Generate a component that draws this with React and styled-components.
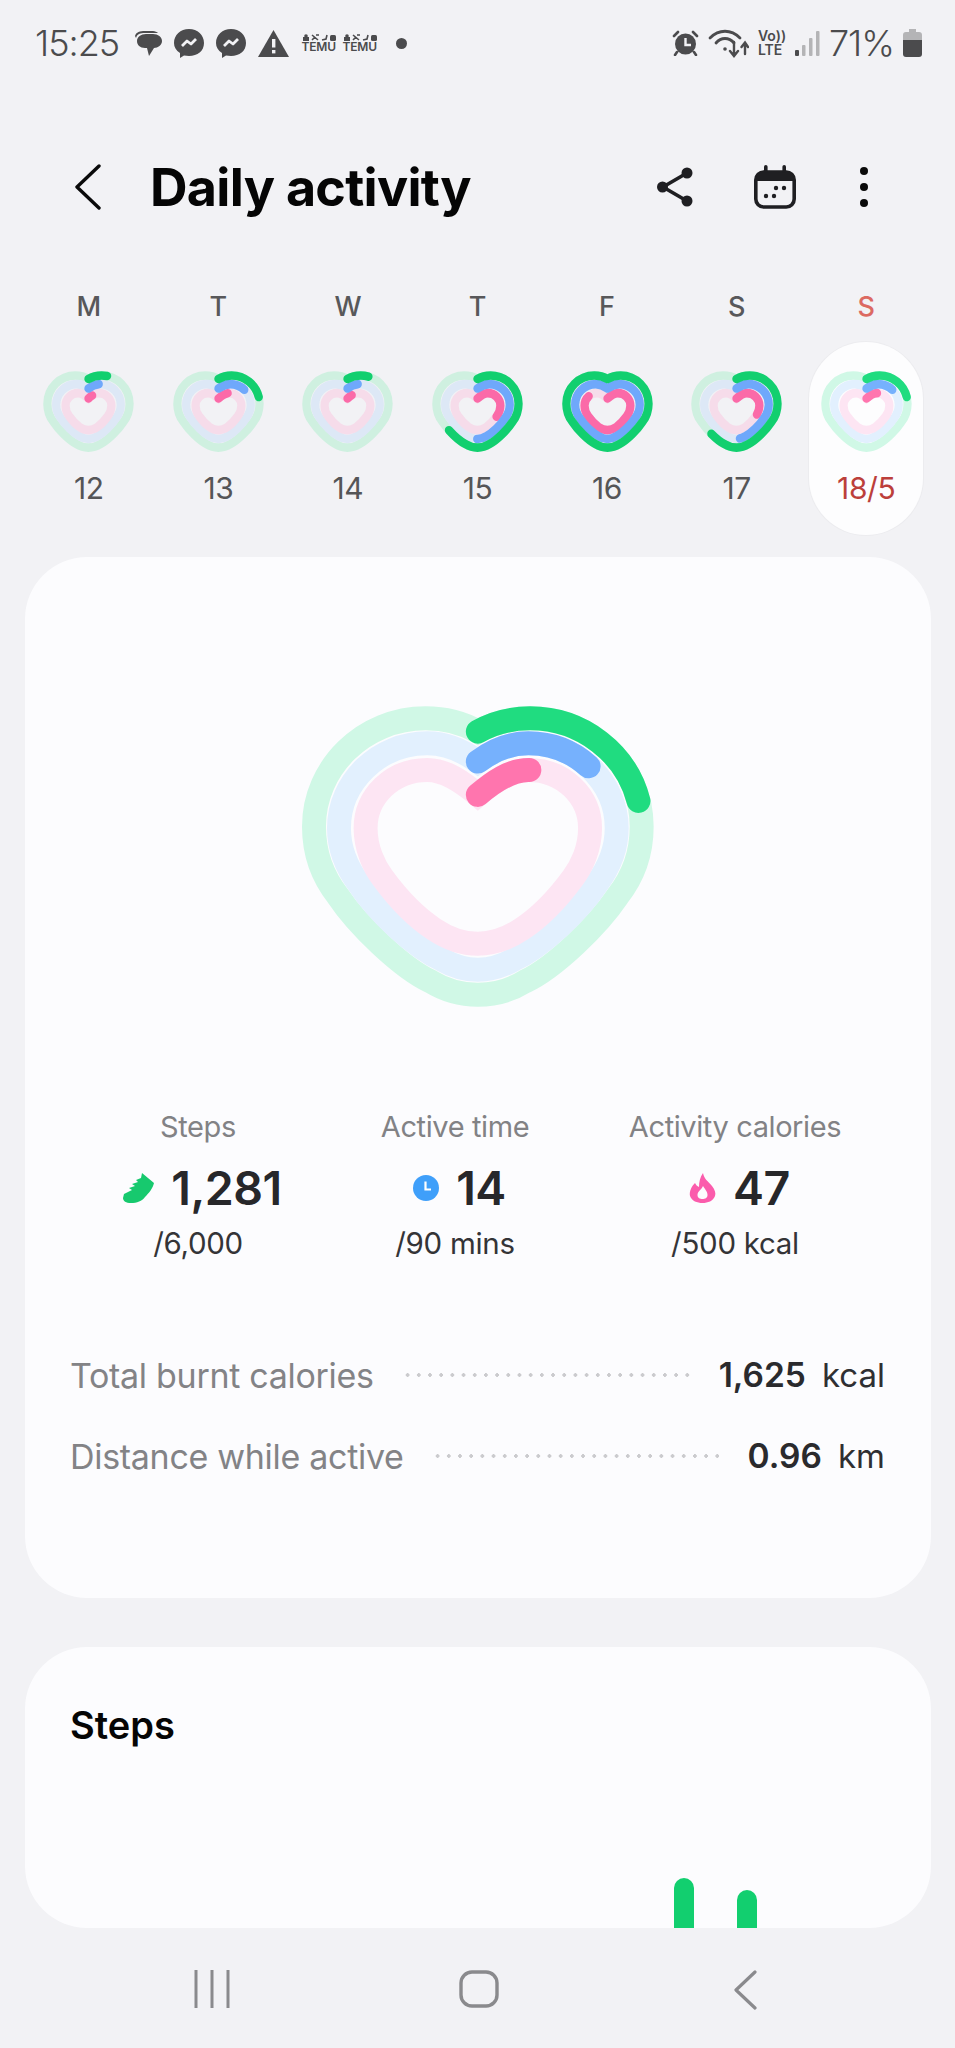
import React from 'react';
import styled, { createGlobalStyle } from 'styled-components';

const OUTER = 'M593 155 C640 128 695 115 750 115 C935 115 1085 262 1085 440 C1085 525 1060 590 1012 650 C955 735 825 862 735 905 C690 933 640 945 593 945 C546 945 496 933 451 905 C361 862 231 735 174 650 C126 590 101 525 101 440 C101 262 251 115 436 115 C491 115 546 128 593 155 Z';
const MIDDLE = 'M593 245 C640 210 690 190 745 190 C890 190 1010 305 1010 445 C1010 510 985 565 950 612 C895 695 785 800 700 840 C665 860 630 870 593 870 C556 870 521 860 486 840 C401 800 291 695 236 612 C201 565 176 510 176 445 C176 305 296 190 441 190 C496 190 546 210 593 245 Z';
const INNER = 'M593 345 C640 305 690 270 745 270 C850 270 930 350 930 445 C930 505 905 560 878 595 C845 640 790 705 725 748 C685 775 640 792 593 792 C546 792 501 775 461 748 C396 705 341 640 308 595 C281 560 256 505 256 445 C256 350 336 270 441 270 C496 270 546 305 593 345 Z';

const RINGS = [OUTER, MIDDLE, INNER];

const days = [
  { label: 'M', date: '12', values: [8, 6, 3.5] },
  { label: 'T', date: '13', values: [21, 15, 8] },
  { label: 'W', date: '14', values: [9, 6, 4] },
  { label: 'T', date: '15', values: [64, 50, 32] },
  { label: 'F', date: '16', values: [100, 100, 84] },
  { label: 'S', date: '17', values: [62, 48, 30] },
  { label: 'S', date: '18/5', values: [21, 15, 9], selected: true },
];

const GlobalStyle = createGlobalStyle`
  html, body {
    margin: 0;
    padding: 0;
    background: #f2f2f5;
  }
  body {
    font-family: 'Inter', 'Roboto', sans-serif;
  }
`;

const Page = styled.div`
  width: 955px;
  height: 2048px;
  overflow: hidden;
  display: flex;
  flex-direction: column;
  background: #f2f2f5;
`;

const StatusBar = styled.div`
  height: 84px;
  padding: 28px 33px 0 35px;
  box-sizing: border-box;
  display: flex;
  align-items: flex-start;
  color: #4b4b4d;
`;

const StatusGroup = styled.div`
  display: flex;
  align-items: center;
  height: 30px;
  gap: ${(p) => p.$gap || 10}px;
  margin-left: ${(p) => (p.$right ? 'auto' : '0')};
`;

const StatusText = styled.span`
  font-size: 36px;
  line-height: 30px;
  font-weight: 300;
  letter-spacing: -1px;
  margin-right: ${(p) => p.$after || 0}px;
`;

const TemuBadge = styled.span`
  display: flex;
  flex-direction: column;
  align-items: center;
  font-size: 12px;
  line-height: 12px;
  font-weight: 600;
  letter-spacing: -0.2px;
  width: 35px;
`;

const StatusDot = styled.span`
  width: 11px;
  height: 11px;
  margin-left: 7px;
  border-radius: 50%;
  background: #4b4b4d;
`;

const VoLte = styled.span`
  display: flex;
  flex-direction: column;
  font-size: 14px;
  line-height: 14px;
  font-weight: 600;
  width: 28px;
`;

const Header = styled.div`
  height: 106px;
  margin-top: 50px;
  box-sizing: border-box;
  padding: 0 0 0 75px;
  display: flex;
  align-items: center;
`;

const Title = styled.h1`
  margin: 0 0 0 49px;
  font-size: 52px;
  font-weight: 700;
  letter-spacing: -0.7px;
  color: #050505;
`;

const HeaderActions = styled.div`
  margin-left: auto;
  display: flex;
  align-items: center;
  margin-right: 87px;
  gap: 60px;
`;

const MoreButton = styled.div`
  display: flex;
  margin-left: 4px;
`;

const Week = styled.div`
  display: grid;
  grid-template-columns: repeat(7, 1fr);
  padding: 0 24px;
  margin-top: 48px;
`;

const Day = styled.div`
  display: flex;
  flex-direction: column;
  align-items: center;
`;

const DayLabel = styled.div`
  font-size: 27px;
  line-height: 30px;
  font-weight: 500;
  height: 30px;
  margin-top: 4px;
  color: ${(p) => (p.$selected ? '#dc6a62' : '#58585a')};
`;

const DayBody = styled.div`
  width: 114px;
  height: 193px;
  margin-top: 20px;
  box-sizing: border-box;
  padding-top: 29px;
  border-radius: 57px;
  display: flex;
  flex-direction: column;
  align-items: center;
  background: ${(p) => (p.$selected ? '#fdfdfe' : 'transparent')};
  box-shadow: ${(p) => (p.$selected ? '0 0 0 1px #ececef' : 'none')};
`;

const DayDate = styled.div`
  font-size: 30px;
  line-height: 34px;
  margin-top: 19px;
  letter-spacing: -0.4px;
  color: ${(p) => (p.$selected ? '#bc3f3b' : '#555557')};
`;

const Card = styled.section`
  margin: ${(p) => p.$top}px 24px 0 25px;
  height: ${(p) => p.$height}px;
  flex-shrink: 0;
  box-sizing: border-box;
  background: #fcfcfe;
  border-radius: 62px;
  overflow: hidden;
  display: flex;
  flex-direction: column;
`;

const BigHeart = styled.div`
  display: flex;
  justify-content: center;
  margin-top: 149px;
`;

const Stats = styled.div`
  display: grid;
  grid-template-columns: 250px 264px 296px;
  margin: 103px 0 0 48px;
`;

const Stat = styled.div`
  display: flex;
  flex-direction: column;
  align-items: center;
`;

const StatLabel = styled.div`
  font-size: 29px;
  line-height: 34px;
  color: #828285;
  letter-spacing: -0.4px;
`;

const StatValue = styled.div`
  display: flex;
  align-items: center;
  gap: 17px;
  height: 54px;
  margin-top: 17px;
  padding-left: 9px;
  font-size: 46.5px;
  font-weight: 600;
  color: #27272a;
  letter-spacing: -0.5px;
`;

const StatGoal = styled.div`
  font-size: 29.5px;
  line-height: 34px;
  margin-top: 11px;
  color: #343437;
  letter-spacing: -0.3px;
`;

const Details = styled.div`
  margin: 95px 46px 0 45px;
  display: flex;
  flex-direction: column;
  gap: 41px;
`;

const DetailRow = styled.div`
  display: flex;
  align-items: center;
  height: 40px;
`;

const DetailLabel = styled.span`
  font-size: 34px;
  color: #838386;
  letter-spacing: -0.3px;
`;

const Dots = styled.span`
  flex: 1;
  height: 4px;
  margin: 0 29px 0 28px;
  background-image: radial-gradient(circle, #cbcbce 1.6px, transparent 2px);
  background-size: 11.2px 4px;
  background-repeat: repeat-x;
`;

const DetailValue = styled.strong`
  font-size: 33.5px;
  font-weight: 600;
  color: #2a2a2d;
`;

const DetailUnit = styled.span`
  font-size: 33px;
  margin-left: 16px;
  color: #2f2f32;
`;

const CardTitle = styled.h2`
  margin: 56px 0 0 45px;
  font-size: 38px;
  line-height: 44px;
  font-weight: 600;
  color: #050505;
`;

const Chart = styled.div`
  flex: 1;
  display: flex;
  align-items: flex-end;
  gap: 43px;
  padding-left: 649px;
`;

const Bar = styled.div`
  width: 20px;
  height: ${(p) => p.$height}px;
  border-radius: 10px 10px 0 0;
  background: #12cf6f;
`;

const NavBar = styled.nav`
  flex: 1;
  display: grid;
  grid-template-columns: repeat(3, 267px);
  padding: 42px 0 0 78px;
  align-content: start;
`;

const NavItem = styled.div`
  display: flex;
  justify-content: center;
`;

// mini hearts have thicker rings, so their centre lines sit further in
const Heart = ({ width, height, values, track, colors, mini }) => {
  const scales = mini ? [0.97, 0.9, 0.79] : [1, 1, 1];
  const stroke = mini ? 96 : 72;
  const ringProps = (i) => ({
    d: RINGS[i],
    strokeWidth: stroke / scales[i],
    transform: `translate(593 532) scale(${scales[i]}) translate(-593 -532)`,
  });
  return (
    <svg width={width} height={height} viewBox="65 78 1057 904" preserveAspectRatio="none">
      <g fill="none" strokeLinecap="round">
        {RINGS.map((d, i) => (
          <path key={d} {...ringProps(i)} stroke={track[i]} />
        ))}
        {[2, 1, 0].map((i) => (
          <path
            key={i}
            {...ringProps(i)}
            pathLength="100"
            stroke={colors[i]}
            strokeDasharray={`${values[i]} 200`}
          />
        ))}
      </g>
    </svg>
  );
};

const BubbleIcon = () => (
  <svg width="28" height="27" viewBox="0 0 28 27" fill="currentColor">
    <path d="M1 6 C2 2 6 1 11 1 H19 C21 1 23 2 24 3 H11 C6 3 3 4 2 8 Z" />
    <path d="M12 4 H19 C24 4 28 7 28 11 C28 15 24 18 20 18 L15 26 L13 18 H11 C6 18 3 15 3 11 C3 7 7 4 12 4 Z" />
  </svg>
);

const MessengerIcon = () => (
  <svg width="30" height="29" viewBox="0 0 30 29">
    <path fill="currentColor" d="M15 0 C23.5 0 30 6 30 14 C30 22 23.5 27 15 27 L10 26.5 L6 29 L6 24 C2 21.5 0 18 0 14 C0 6 6.5 0 15 0 Z" />
    <path fill="none" stroke="#f2f2f5" strokeWidth="2.8" strokeLinejoin="round" d="M8 17 L13 12 L17 15 L22 10" />
  </svg>
);

const WarningIcon = () => (
  <svg width="31" height="27" viewBox="0 0 31 27">
    <path fill="currentColor" d="M15.5 0 L31 27 H0 Z" />
    <rect x="14" y="9" width="3.4" height="8.5" fill="#f2f2f5" />
    <rect x="14" y="20" width="3.4" height="3.4" fill="#f2f2f5" />
  </svg>
);

const TemuGlyph = () => (
  <svg width="34" height="7" viewBox="0 0 34 7" fill="currentColor">
    <rect x="1" y="3" width="6" height="4" />
    <circle cx="4" cy="2" r="1.8" />
    <path d="M10 1 L16 6 M10 6 L13 3 M14 1 L17 1" stroke="currentColor" strokeWidth="1.6" />
    <path d="M20 6 L24 5 L25 1" stroke="currentColor" strokeWidth="1.6" fill="none" />
    <rect x="28" y="1" width="6" height="6" rx="1.5" />
  </svg>
);

const AlarmIcon = () => (
  <svg width="27" height="26" viewBox="0 0 27 26">
    <circle cx="13.5" cy="14" r="10.5" fill="currentColor" />
    <path d="M2 6 L6 2 M25 6 L21 2 M5 22 L3 25 M22 22 L24 25" stroke="currentColor" strokeWidth="2.6" strokeLinecap="round" />
    <path d="M13.5 8 V15 H19" fill="none" stroke="#f2f2f5" strokeWidth="2.4" />
  </svg>
);

const WifiIcon = () => (
  <svg width="41" height="30" viewBox="0 0 41 30" fill="none" stroke="currentColor" strokeLinecap="round">
    <path d="M2 10 C11 1 23 1 32 10" strokeWidth="2.8" />
    <path d="M8 15 C13 9 21 9 26 15" strokeWidth="2.8" />
    <circle cx="17" cy="21" r="1.8" fill="currentColor" stroke="none" />
    <path d="M26 14 V27 M22 23 L26 28 L30 23 M37 26 V15 M33.5 19 L37 14.5 L40 19" strokeWidth="2.4" />
  </svg>
);

const SignalIcon = () => (
  <svg width="25" height="26" viewBox="0 0 25 26">
    <rect x="0" y="20" width="4" height="6" rx="1" fill="#4b4b4d" />
    <rect x="7" y="15" width="3.5" height="11" rx="1" fill="#b4b4b6" />
    <rect x="14" y="8" width="3.5" height="18" rx="1" fill="#b4b4b6" />
    <rect x="21" y="1" width="3.5" height="25" rx="1" fill="#b4b4b6" />
  </svg>
);

const BatteryIcon = () => (
  <svg width="19" height="28" viewBox="0 0 19 28">
    <path fill="#b4b4b6" d="M6 0 H13 V3 H16 C18 3 19 4 19 6 V12 H0 V6 C0 4 1 3 3 3 H6 Z" />
    <path fill="#4b4b4d" d="M0 11 H19 V25 C19 27 18 28 16 28 H3 C1 28 0 27 0 25 Z" />
  </svg>
);

const BackIcon = () => (
  <svg width="26" height="46" viewBox="0 0 26 46" fill="none" stroke="#0a0a0a" strokeWidth="3.4" strokeLinecap="round" strokeLinejoin="round">
    <path d="M24 2 L2 23 L24 44" />
  </svg>
);

const ShareIcon = () => (
  <svg width="38" height="42" viewBox="0 0 38 42" fill="#1f1f22" stroke="#1f1f22">
    <path d="M31 7 L7 21 L31 35" fill="none" strokeWidth="3.6" />
    <circle cx="31" cy="7" r="5.5" strokeWidth="0" />
    <circle cx="6.5" cy="21" r="5.5" strokeWidth="0" />
    <circle cx="31" cy="35" r="5.5" strokeWidth="0" />
  </svg>
);

const CalendarIcon = () => (
  <svg width="42" height="44" viewBox="0 0 42 44" fill="#1f1f22">
    <rect x="1.8" y="7" width="38.4" height="35" rx="8" fill="none" stroke="#1f1f22" strokeWidth="3.6" />
    <path d="M2 15 C2 10 5 6 10 6 H32 C37 6 40 10 40 15 V16 H2 Z" />
    <rect x="10" y="0" width="3.6" height="8" rx="1.8" />
    <rect x="28.4" y="0" width="3.6" height="8" rx="1.8" />
    <circle cx="22" cy="23" r="2.2" />
    <circle cx="30" cy="23" r="2.2" />
    <circle cx="12" cy="31" r="2.2" />
    <circle cx="20" cy="31" r="2.2" />
  </svg>
);

const MoreIcon = () => (
  <svg width="8" height="40" viewBox="0 0 8 40" fill="#0a0a0a">
    <circle cx="4" cy="4" r="4" />
    <circle cx="4" cy="20" r="4" />
    <circle cx="4" cy="36" r="4" />
  </svg>
);

const ShoeIcon = () => (
  <svg width="31" height="30" viewBox="0 0 31 30" fill="#17c96e">
    <path d="M19 0 L31 10 C30 15 26 20 22 24 C19 28 14 30 8 30 C3 30 0 28 0 25 L1 21 L9 17 L6 15 L12 13 L9 11 L15 9 L13 7 L18 5 Z" />
  </svg>
);

const ClockIcon = () => (
  <svg width="26" height="26" viewBox="0 0 26 26">
    <circle cx="13" cy="13" r="13" fill="#3f9ffa" />
    <path d="M12.5 6.5 V14.5 H18" fill="none" stroke="#fff" strokeWidth="2.2" />
  </svg>
);

const FlameIcon = () => (
  <svg width="27" height="30" viewBox="0 0 27 30">
    <path
      fillRule="evenodd"
      fill="#fb5cac"
      d="M14 0 C15 6 19 8 23 13 C26 17 27 20 26 23 C24 28 19 30 13.5 30 C8 30 3 28 1 23 C0 18 3 13 6 10 C7 12 8 13 10 14 C10 9 11 4 14 0 Z M14 13 C12.5 17 8.5 18 8.5 22 C8.5 25 11 26 13.5 26 C16 26 18.5 25 18.5 22 C18.5 18 15.5 16 14 13 Z"
    />
  </svg>
);

const RecentsIcon = () => (
  <svg width="36" height="38" viewBox="0 0 36 38" stroke="#8a8a8d" strokeWidth="3">
    <path d="M2 0 V38 M18 0 V38 M34 0 V38" />
  </svg>
);

const HomeIcon = () => (
  <svg width="40" height="38" viewBox="0 0 40 38" fill="none" stroke="#8a8a8d" strokeWidth="3.4">
    <rect x="2" y="2" width="36" height="34" rx="11" />
  </svg>
);

const NavBackIcon = () => (
  <svg width="23" height="40" viewBox="0 0 23 40" fill="none" stroke="#8a8a8d" strokeWidth="3.2" strokeLinecap="round" strokeLinejoin="round">
    <path d="M21 2 L2 20 L21 38" />
  </svg>
);

const stats = [
  { label: 'Steps', value: '1,281', goal: '/6,000', icon: <ShoeIcon /> },
  { label: 'Active time', value: '14', goal: '/90 mins', icon: <ClockIcon /> },
  { label: 'Activity calories', value: '47', goal: '/500 kcal', icon: <FlameIcon /> },
];

const dayTrack = ['#cff0e0', '#dde8f6', '#f6dcea'];
const selectedTrack = ['#d0f8e6', '#e2f0fe', '#fde5f3'];
const dayColors = ['#12cf6f', '#6fa8fb', '#fb6aa8'];
const bigColors = ['#20dc80', '#76b1fd', '#ff75ae'];

const App = () => (
  <Page>
    <GlobalStyle />
    <StatusBar>
      <StatusGroup $gap={12}>
        <StatusText $after={3}>15:25</StatusText>
        <BubbleIcon />
        <MessengerIcon />
        <MessengerIcon />
        <WarningIcon />
        <StatusGroup $gap={6}>
          <TemuBadge><TemuGlyph />TEMU</TemuBadge>
          <TemuBadge><TemuGlyph />TEMU</TemuBadge>
        </StatusGroup>
        <StatusDot />
      </StatusGroup>
      <StatusGroup $right $gap={9}>
        <AlarmIcon />
        <WifiIcon />
        <VoLte><span>Vo))</span><span>LTE</span></VoLte>
        <SignalIcon />
        <StatusText>71%</StatusText>
        <BatteryIcon />
      </StatusGroup>
    </StatusBar>

    <Header>
      <BackIcon />
      <Title>Daily activity</Title>
      <HeaderActions>
        <ShareIcon />
        <CalendarIcon />
        <MoreButton><MoreIcon /></MoreButton>
      </HeaderActions>
    </Header>

    <Week>
      {days.map((d) => (
        <Day key={d.date}>
          <DayLabel $selected={d.selected}>{d.label}</DayLabel>
          <DayBody $selected={d.selected}>
            <Heart
              mini
              width={91}
              height={81}
              values={d.values}
              track={d.selected ? selectedTrack : dayTrack}
              colors={d.selected ? bigColors : dayColors}
            />
            <DayDate $selected={d.selected}>{d.date}</DayDate>
          </DayBody>
        </Day>
      ))}
    </Week>

    <Card $top={22} $height={1041}>
      <BigHeart>
        <Heart width={352} height={301} values={[21, 15, 9]} track={selectedTrack} colors={bigColors} />
      </BigHeart>
      <Stats>
        {stats.map((s) => (
          <Stat key={s.label}>
            <StatLabel>{s.label}</StatLabel>
            <StatValue>{s.icon}<span>{s.value}</span></StatValue>
            <StatGoal>{s.goal}</StatGoal>
          </Stat>
        ))}
      </Stats>
      <Details>
        <DetailRow>
          <DetailLabel>Total burnt calories</DetailLabel>
          <Dots />
          <DetailValue>1,625</DetailValue>
          <DetailUnit>kcal</DetailUnit>
        </DetailRow>
        <DetailRow>
          <DetailLabel>Distance while active</DetailLabel>
          <Dots />
          <DetailValue>0.96</DetailValue>
          <DetailUnit>km</DetailUnit>
        </DetailRow>
      </Details>
    </Card>

    <Card $top={49} $height={281}>
      <CardTitle>Steps</CardTitle>
      <Chart>
        <Bar $height={50} />
        <Bar $height={38} />
      </Chart>
    </Card>

    <NavBar>
      <NavItem><RecentsIcon /></NavItem>
      <NavItem><HomeIcon /></NavItem>
      <NavItem><NavBackIcon /></NavItem>
    </NavBar>
  </Page>
);

export default App;
